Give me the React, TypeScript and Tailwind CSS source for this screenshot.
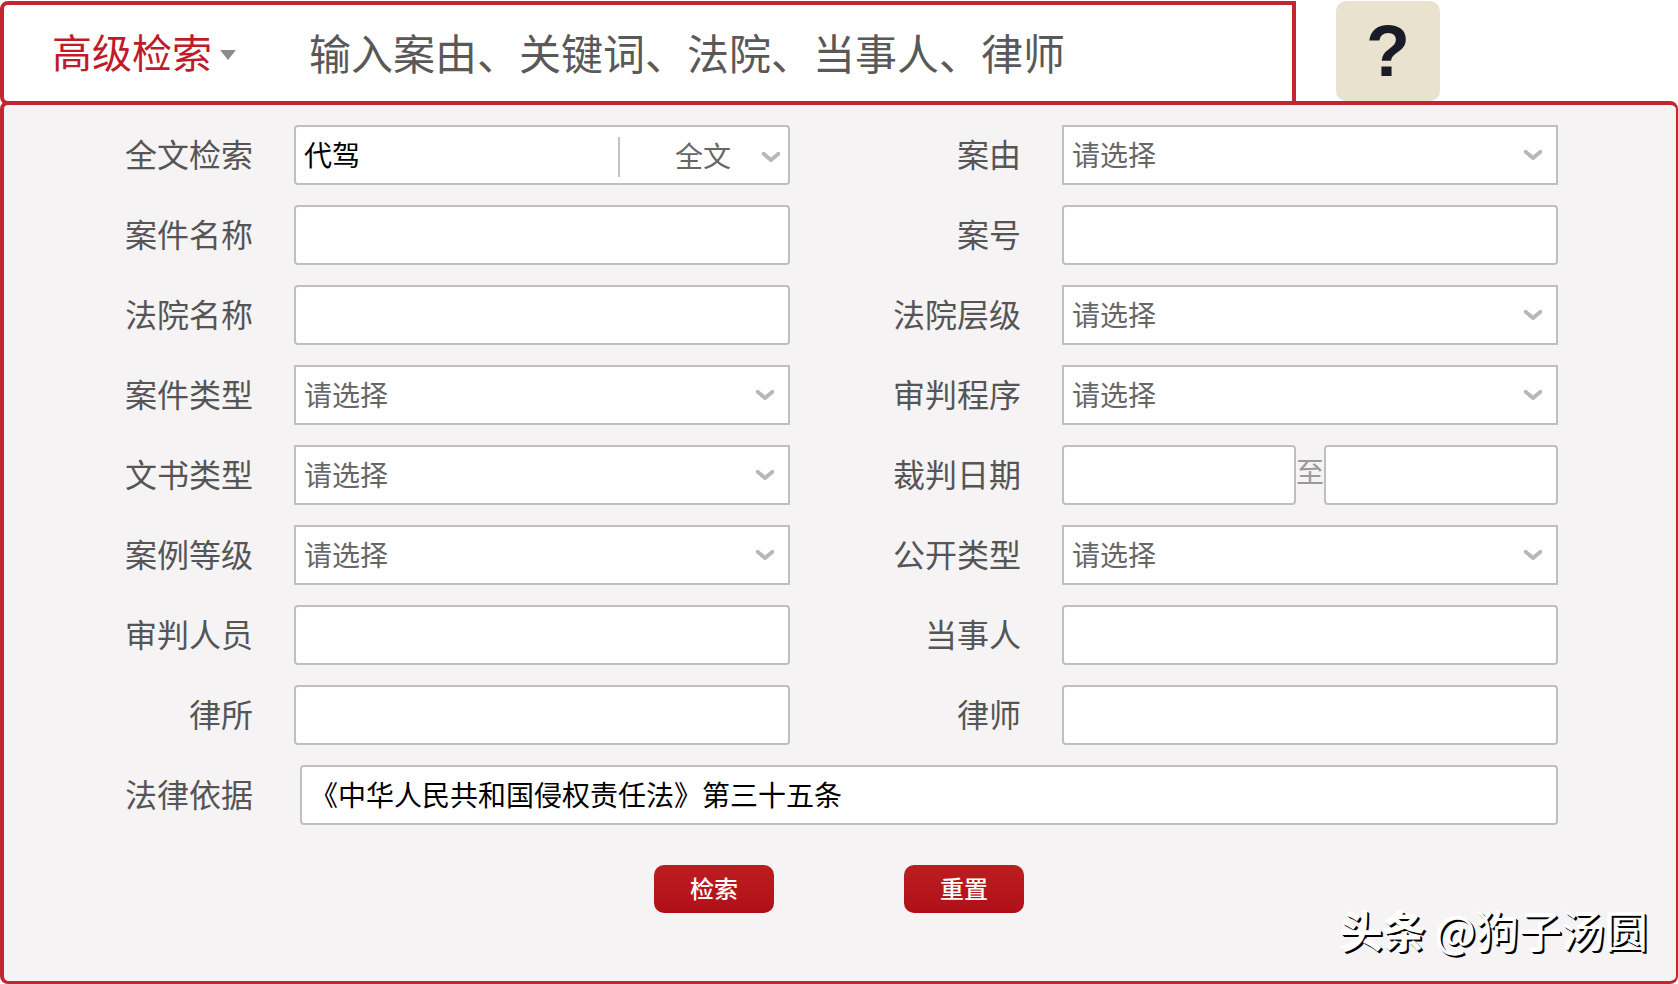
import { useId, type ReactNode } from "react";
import { clsx } from "clsx";

type FieldType = "text" | "select" | "fulltext" | "range";

interface Field {
  label: string;
  type: FieldType;
}

const fields: Field[] = [
  { label: "全文检索", type: "fulltext" },
  { label: "案由", type: "select" },
  { label: "案件名称", type: "text" },
  { label: "案号", type: "text" },
  { label: "法院名称", type: "text" },
  { label: "法院层级", type: "select" },
  { label: "案件类型", type: "select" },
  { label: "审判程序", type: "select" },
  { label: "文书类型", type: "select" },
  { label: "裁判日期", type: "range" },
  { label: "案例等级", type: "select" },
  { label: "公开类型", type: "select" },
  { label: "审判人员", type: "text" },
  { label: "当事人", type: "text" },
  { label: "律所", type: "text" },
  { label: "律师", type: "text" },
];

const box = "h-[60px] border-2 border-[#bfbfbf] bg-white text-[28px] outline-none";

function Chevron({ className }: { className?: string }) {
  return (
    <svg
      viewBox="0 0 18 10"
      className={clsx("pointer-events-none absolute h-2.5 w-[18px]", className)}
      aria-hidden
    >
      <path d="M0 0.5 9 8 18 0.5" fill="none" stroke="#b8b8b8" strokeWidth="4" />
    </svg>
  );
}

function TextBox({ id, label, value }: { id?: string; label?: string; value?: string }) {
  return (
    <input
      id={id}
      type="text"
      aria-label={label}
      defaultValue={value}
      className={clsx(box, "w-full min-w-0 flex-1 rounded-sm px-2 pb-0.5 text-black")}
    />
  );
}

function SelectBox({ id }: { id: string }) {
  return (
    <div className="relative flex min-w-0 flex-1 items-center">
      <select id={id} className={clsx(box, "w-full appearance-none px-2 pb-0.5 text-[#666]")}>
        <option>请选择</option>
      </select>
      <Chevron className="right-4" />
    </div>
  );
}

function FullTextBox({ id }: { id: string }) {
  return (
    <div className={clsx(box, "flex min-w-0 flex-1 rounded-sm")}>
      <input
        id={id}
        type="text"
        defaultValue="代驾"
        className="min-w-0 flex-1 bg-transparent px-2 pb-0.5 text-black outline-none"
      />
      <div className="relative mt-2.5 flex h-10 w-[170px] items-center border-l-2 border-[#c4c4c4]">
        <select
          aria-label="检索范围"
          className="h-9 w-full appearance-none self-start bg-transparent pl-[55px] leading-9 text-[#666] outline-none"
        >
          <option>全文</option>
        </select>
        <Chevron className="right-2" />
      </div>
    </div>
  );
}

function DateRange({ id }: { id: string }) {
  return (
    <div className="flex min-w-0 flex-1 items-center">
      <TextBox id={id} />
      <span className="pb-2 text-[28px] leading-10 text-[#999]">至</span>
      <TextBox label="裁判日期截止" />
    </div>
  );
}

function Row({ id, label, children }: { id: string; label: string; children: ReactNode }) {
  return (
    <div className="flex items-center">
      <label
        htmlFor={id}
        className="mr-[41px] w-[129px] shrink-0 pb-1 text-right text-[32px] leading-12 text-[#555]"
      >
        {label}
      </label>
      {children}
    </div>
  );
}

function FieldRow({ label, type }: Field) {
  const id = useId();

  return (
    <Row id={id} label={label}>
      {type === "text" && <TextBox id={id} />}
      {type === "select" && <SelectBox id={id} />}
      {type === "fulltext" && <FullTextBox id={id} />}
      {type === "range" && <DateRange id={id} />}
    </Row>
  );
}

function ActionButton({ type, children }: { type: "submit" | "reset"; children: ReactNode }) {
  return (
    <button
      type={type}
      className="h-12 w-[120px] rounded-[10px] bg-linear-to-b from-[#bc1d20] to-[#b00f18] pb-0.5 text-2xl font-medium text-white"
    >
      {children}
    </button>
  );
}

export default function App() {
  return (
    <div className="flex min-h-screen flex-col bg-white pt-px font-['Noto_Sans_CJK_SC',sans-serif]">
      <header className="flex items-start pr-[238px]">
        <div className="flex h-[104px] min-w-0 flex-1 items-center rounded-l-lg border-4 border-[#c22631] pl-12">
          <button
            type="button"
            className="flex shrink-0 items-center gap-2 pb-1 text-[40px] leading-none text-[#c01a2b]"
          >
            高级检索
            <svg viewBox="0 0 16 10" className="mt-2 h-2.5 w-4" aria-hidden>
              <path d="M0 0H16L8 10Z" fill="#8c8c8c" />
            </svg>
          </button>
          <input
            type="search"
            aria-label="关键词"
            placeholder="输入案由、关键词、法院、当事人、律师"
            className="ml-[73px] h-full min-w-0 flex-1 bg-transparent pb-1 text-[42px] outline-none placeholder:text-[#595959]"
          />
        </div>
        <button
          type="button"
          aria-label="帮助"
          className="ml-10 h-[100px] w-[104px] shrink-0 rounded-[10px] bg-[#e9e2cf] font-['Liberation_Sans',sans-serif] text-[72px] leading-none font-bold text-[#1a1b28]"
        >
          ?
        </button>
      </header>

      <form
        className="relative -mt-1 flex-1 rounded-lg border-4 border-r-2 border-b-3 border-[#c22631] bg-[#f5f3f4] pt-5 pb-16"
        onSubmit={(e) => e.preventDefault()}
      >
        <div className="grid grid-cols-2 gap-x-[102px] gap-y-5 pr-[118px] pl-[120px]">
          {fields.map((field) => (
            <FieldRow key={field.label} {...field} />
          ))}
          <div className="col-span-2">
            <Row id="law" label="法律依据">
              <div className="flex flex-1 pl-1.5">
                <TextBox id="law" value="《中华人民共和国侵权责任法》第三十五条" />
              </div>
            </Row>
          </div>
        </div>

        <div className="mt-10 flex justify-center gap-[130px] pr-0.5">
          <ActionButton type="submit">检索</ActionButton>
          <ActionButton type="reset">重置</ActionButton>
        </div>

        <p className="absolute right-7 bottom-[22px] text-[43px] leading-[60px] text-white [text-shadow:1px_1px_0_#000,2px_2px_0_#000,-1px_-1px_0_#fff]">
          <span className="font-bold">头条</span> @狗子汤圆
        </p>
      </form>
    </div>
  );
}
